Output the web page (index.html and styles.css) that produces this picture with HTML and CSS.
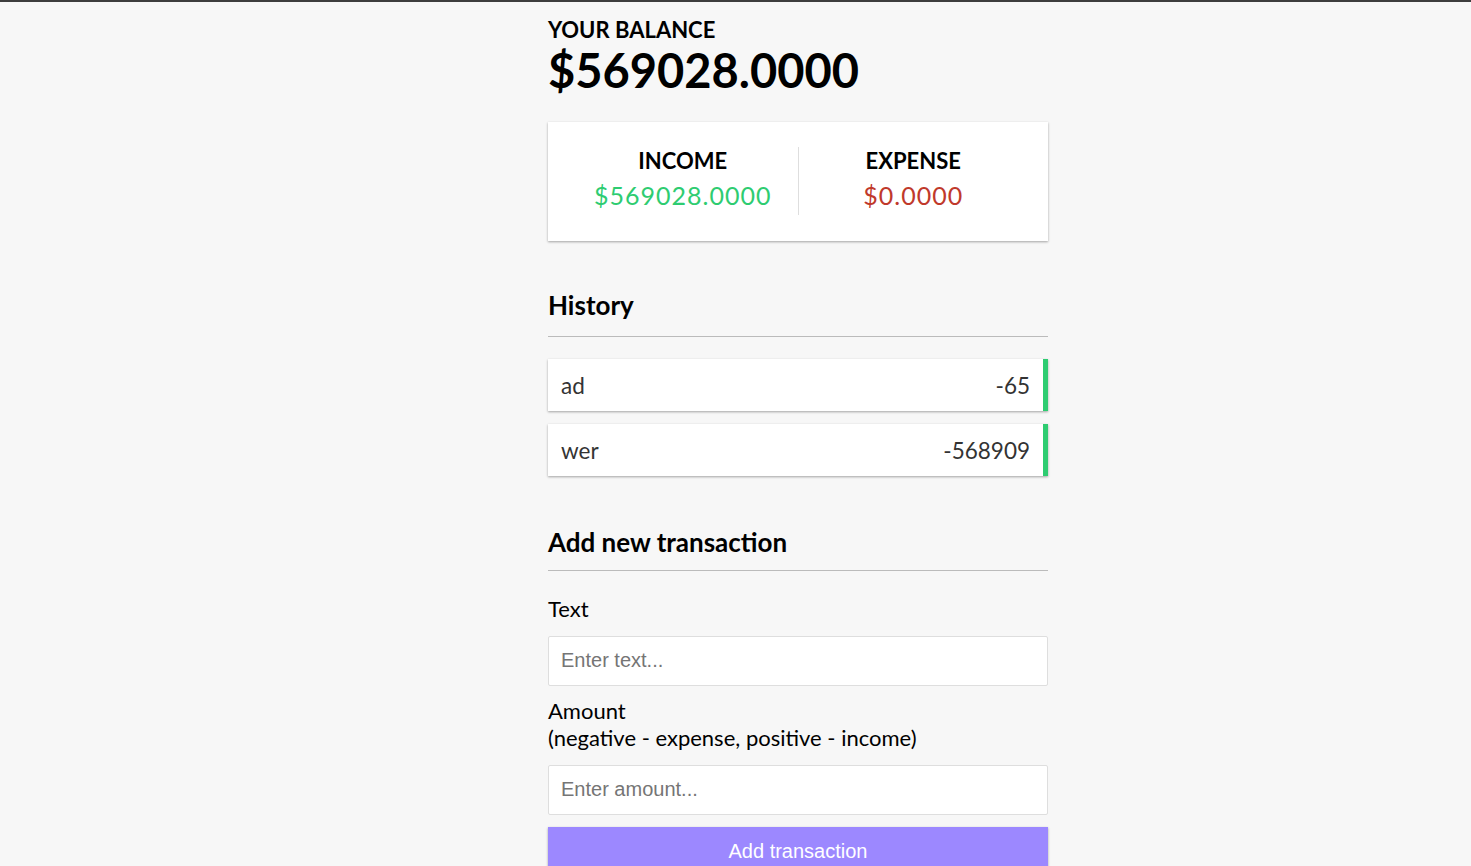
FILE: index.html
```html
<!DOCTYPE html>
<html lang="en">
<head>
<meta charset="UTF-8">
<title>Expense Tracker</title>
<link rel="stylesheet" href="styles.css">
</head>
<body>
<div class="page">
  <div class="container">
    <h4 class="balance-label">Your Balance</h4>
    <h1 class="balance">$569028.0000</h1>

    <div class="inc-exp">
      <div class="inc-exp-col inc-exp-col--first">
        <h4 class="inc-exp-title">Income</h4>
        <p class="money money--plus">$569028.0000</p>
      </div>
      <div class="inc-exp-col">
        <h4 class="inc-exp-title">Expense</h4>
        <p class="money money--minus">$0.0000</p>
      </div>
    </div>

    <h3 class="section-title section-title--history">History</h3>
    <ul class="list">
      <li class="list-item list-item--plus"><span>ad</span><span>-65</span></li>
      <li class="list-item list-item--plus"><span>wer</span><span>-568909</span></li>
    </ul>

    <h3 class="section-title section-title--add">Add new transaction</h3>
    <form class="form">
      <div class="form-control">
        <label class="label" for="text">Text</label>
        <input class="input" type="text" id="text" placeholder="Enter text...">
      </div>
      <div class="form-control">
        <label class="label label--amount" for="amount">Amount <br>(negative - expense, positive - income)</label>
        <input class="input" type="number" id="amount" placeholder="Enter amount...">
      </div>
      <button class="btn" type="button">Add transaction</button>
    </form>
  </div>
</div>
</body>
</html>
```
FILE: styles.css
```css
* { box-sizing: border-box; }

html, body {
  margin: 0;
  padding: 0;
}

body {
  background-color: #f7f7f7;
  border-top: 2px solid #3d3d3d;
  font-family: "Lato", "Noto Sans", sans-serif;
  color: #000;
  min-height: 100vh;
}

.page {
  display: flex;
}

.container {
  width: 500px;
  margin-left: 548px;
}

.balance-label {
  font-size: 22px;
  font-weight: 700;
  text-transform: uppercase;
  margin: 16px 0 0;
  line-height: 24px;
}

.balance {
  font-size: 47px;
  font-weight: 700;
  margin: 1px 0 0;
  line-height: 54px;
}

.inc-exp {
  background: #fff;
  box-shadow: 0 1px 3px rgba(0,0,0,0.12), 0 1px 2px rgba(0,0,0,0.24);
  padding: 25px 20px 26px;
  display: flex;
  margin: 25px 0 0;
}

.inc-exp-col {
  flex: 1;
  text-align: center;
}

.inc-exp-col--first {
  border-right: 1px solid #dedede;
}

.inc-exp-title {
  margin: 0;
  padding-top: 2px;
  font-size: 22px;
  font-weight: 700;
  text-transform: uppercase;
  line-height: 24px;
}

.money {
  font-size: 25px;
  letter-spacing: 1px;
  margin: 7px 0 5px;
  line-height: 30px;
}

.money--plus { color: #2ecc71; }
.money--minus { color: #c0392b; }

.section-title {
  font-size: 26px;
  font-weight: 700;
  line-height: 30px;
  border-bottom: 1px solid #bbb;
  margin: 0;
}

.section-title--history {
  margin-top: 49px;
  padding-bottom: 16px;
}

.section-title--add {
  margin-top: 51px;
  padding-bottom: 13px;
}

.list {
  list-style: none;
  padding: 0;
  margin: 22px 0 0;
  display: flex;
  flex-direction: column;
  gap: 13px;
}

.list-item {
  background: #fff;
  box-shadow: 0 1px 3px rgba(0,0,0,0.12), 0 1px 2px rgba(0,0,0,0.24);
  color: #333;
  display: flex;
  justify-content: space-between;
  font-size: 22.5px;
  line-height: 26px;
  padding: 14px 13px 12px 13px;
}

.list-item--plus { border-right: 5px solid #2ecc71; }
.list-item--minus { border-right: 5px solid #c0392b; }

.form {
  display: flex;
  flex-direction: column;
}

.form-control {
  display: flex;
  flex-direction: column;
}

.label {
  font-size: 22px;
  line-height: 27px;
  margin: 24px 0 14px;
}

.label--amount {
  margin: 11px 0 14px;
}

.input {
  display: block;
  width: 100%;
  height: 50px;
  border: 1px solid #dedede;
  border-radius: 2px;
  background: #fff;
  font-family: "Liberation Sans", Arial, sans-serif;
  font-size: 20px;
  padding: 9px 12px 11px;
  color: #333;
  outline: none;
}

.input::placeholder { color: #757575; }

.btn {
  display: block;
  width: 100%;
  margin: 12px 0 30px;
  padding: 9px 10px 11px;
  height: 50px;
  background-color: #9c88ff;
  color: #fff;
  border: 0;
  font-family: "Liberation Sans", Arial, sans-serif;
  font-size: 20px;
  box-shadow: 0 1px 3px rgba(0,0,0,0.12), 0 1px 2px rgba(0,0,0,0.24);
  cursor: pointer;
}
```
